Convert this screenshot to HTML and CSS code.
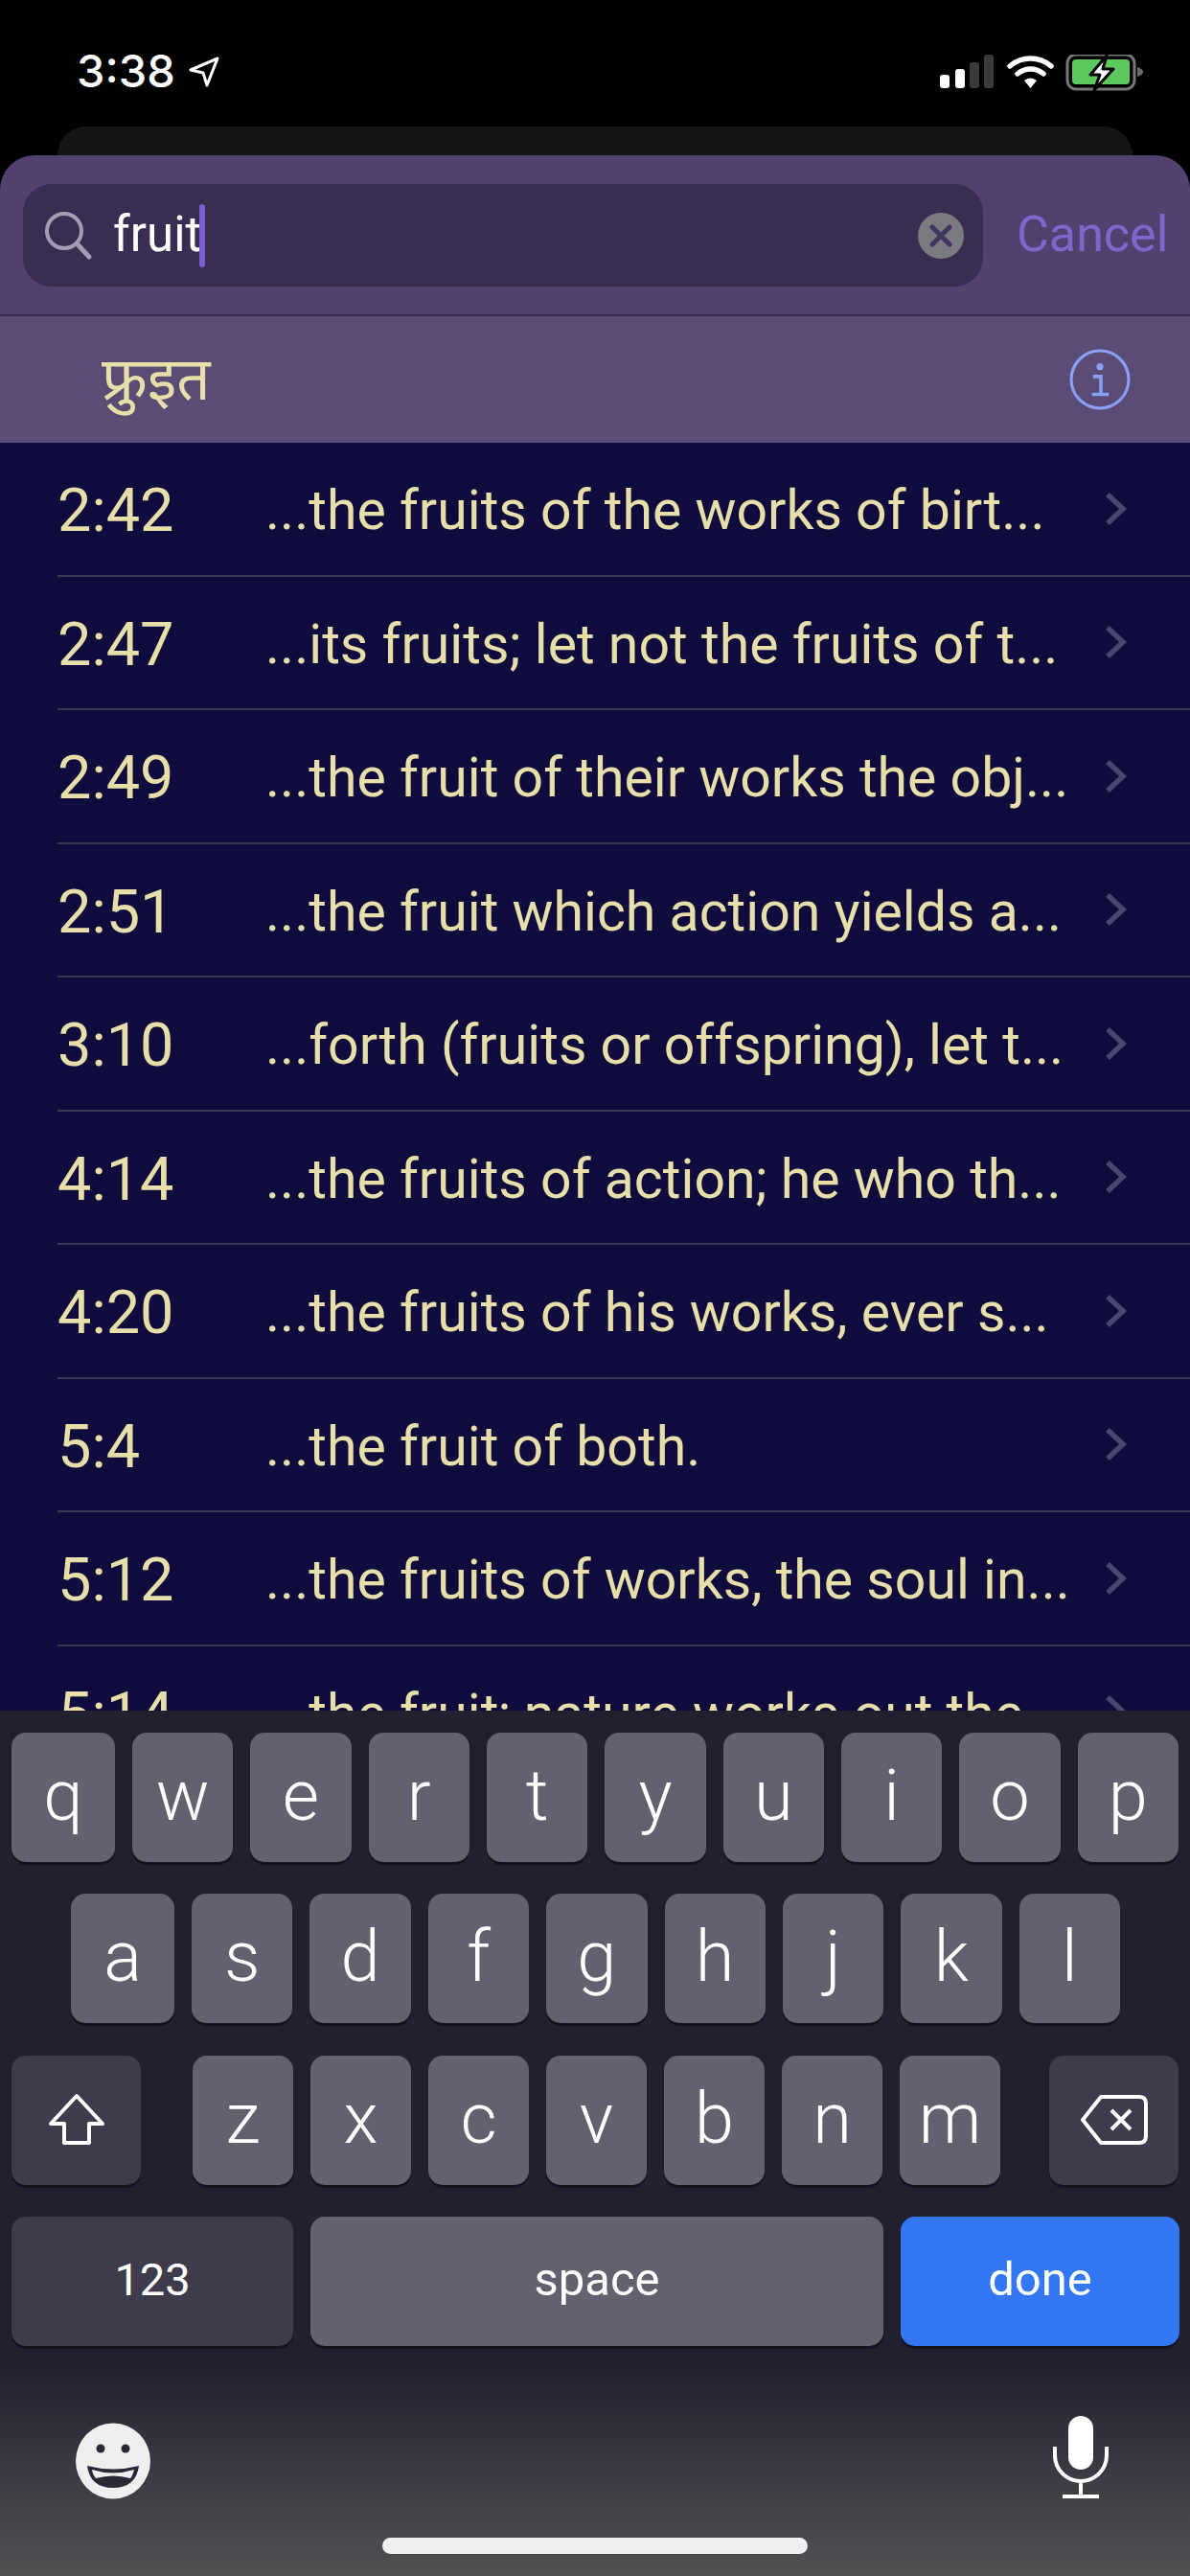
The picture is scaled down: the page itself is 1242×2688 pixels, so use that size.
FILE: index.html
```html
<!DOCTYPE html>
<html lang="en">
<head>
    <meta charset="UTF-8">
    <meta name="viewport" content="width=device-width, initial-scale=1.0">
    <title>Search</title>
    <link rel="stylesheet" href="styles.css">
</head>
<body>
    <div class="status-bar">
        <div class="status-left">
            <span class="time">3:38</span>
            <svg class="arrow" width="32" height="32" viewBox="0 0 32 32"><path d="M30 2 L2 14 L15 17 L19 30 Z" fill="none" stroke="#fff" stroke-width="3" stroke-linejoin="round"/></svg>
        </div>
        <div class="status-right">
            <svg width="214" height="40" viewBox="0 0 214 40">
                <rect x="0" y="21" width="10" height="14" rx="3" fill="#fff"/>
                <rect x="16" y="15" width="10" height="20" rx="3" fill="#fff"/>
                <rect x="31" y="8" width="10" height="27" rx="3" fill="#3a3a3c"/>
                <rect x="46" y="0" width="10" height="35" rx="3" fill="#3a3a3c"/>
                <path d="M73 12 A33 33 0 0 1 116 12" fill="none" stroke="#fff" stroke-width="5.5" stroke-linecap="round"/>
                <path d="M81 20 A21 21 0 0 1 108 20" fill="none" stroke="#fff" stroke-width="5.5" stroke-linecap="round"/>
                <path d="M88 27 Q94.500 22 101 27 L94.500 35 Z" fill="#fff"/>
                <rect x="133" y="0" width="70" height="36" rx="9" fill="none" stroke="#77777a" stroke-width="3"/>
                <rect x="138" y="5" width="60" height="26" rx="4" fill="#5cc85e"/>
                <path d="M206 13 Q212 15 212 18 Q212 21 206 23 Z" fill="#6b6b6e"/>
                <path d="M174 1 L157 21 L167 21 L161 37 L181 15 L170 15 Z" fill="#fff" stroke="#000" stroke-width="3" stroke-linejoin="round"/>
            </svg>
        </div>
    </div>
    <div class="card-peek"></div>

    <div class="sheet">
        <div class="search-header">
            <div class="search-field">
                <svg class="search-icon" width="52" height="52" viewBox="0 0 52 52"><circle cx="21" cy="21" r="18" fill="none" stroke="#a39db3" stroke-width="4"/><path d="M34 34 L47 48" stroke="#a39db3" stroke-width="5" stroke-linecap="round"/></svg>
                <span class="search-text">fruit</span>
                <span class="caret"></span>
                <svg class="clear-icon" width="48" height="48" viewBox="0 0 48 48"><circle cx="24" cy="24" r="24" fill="#7b7a80"/><path d="M15 15 L33 33 M33 15 L15 33" stroke="#3f3560" stroke-width="5" stroke-linecap="round"/></svg>
            </div>
            <span class="cancel">Cancel</span>
        </div>
        <div class="info-row">
            <span class="hindi">फ्रुइत</span>
            <svg width="64" height="64" viewBox="0 0 62 62">
                <circle cx="31" cy="31" r="29" fill="none" stroke="#8aa0f5" stroke-width="3"/>
                <circle cx="31" cy="18" r="3.500" fill="#8aa0f5"/>
                <path d="M24 28 H32 V45 M23 46 H40" fill="none" stroke="#8aa0f5" stroke-width="3.500"/>
            </svg>
        </div>
        <div class="results">
            <div class="row"><span class="ref">2:42</span><span class="snippet">...the fruits of the works of birt...</span><svg class="chevron" width="24" height="36" viewBox="0 0 24 36"><path d="M3 3 L19 18 L3 33" fill="none" stroke="#4a4670" stroke-width="5.500"/></svg></div>
            <div class="row"><span class="ref">2:47</span><span class="snippet">...its fruits; let not the fruits of t...</span><svg class="chevron" width="24" height="36" viewBox="0 0 24 36"><path d="M3 3 L19 18 L3 33" fill="none" stroke="#4a4670" stroke-width="5.500"/></svg></div>
            <div class="row"><span class="ref">2:49</span><span class="snippet">...the fruit of their works the obj...</span><svg class="chevron" width="24" height="36" viewBox="0 0 24 36"><path d="M3 3 L19 18 L3 33" fill="none" stroke="#4a4670" stroke-width="5.500"/></svg></div>
            <div class="row"><span class="ref">2:51</span><span class="snippet">...the fruit which action yields a...</span><svg class="chevron" width="24" height="36" viewBox="0 0 24 36"><path d="M3 3 L19 18 L3 33" fill="none" stroke="#4a4670" stroke-width="5.500"/></svg></div>
            <div class="row"><span class="ref">3:10</span><span class="snippet">...forth (fruits or offspring), let t...</span><svg class="chevron" width="24" height="36" viewBox="0 0 24 36"><path d="M3 3 L19 18 L3 33" fill="none" stroke="#4a4670" stroke-width="5.500"/></svg></div>
            <div class="row"><span class="ref">4:14</span><span class="snippet">...the fruits of action; he who th...</span><svg class="chevron" width="24" height="36" viewBox="0 0 24 36"><path d="M3 3 L19 18 L3 33" fill="none" stroke="#4a4670" stroke-width="5.500"/></svg></div>
            <div class="row"><span class="ref">4:20</span><span class="snippet">...the fruits of his works, ever s...</span><svg class="chevron" width="24" height="36" viewBox="0 0 24 36"><path d="M3 3 L19 18 L3 33" fill="none" stroke="#4a4670" stroke-width="5.500"/></svg></div>
            <div class="row"><span class="ref">5:4</span><span class="snippet">...the fruit of both.</span><svg class="chevron" width="24" height="36" viewBox="0 0 24 36"><path d="M3 3 L19 18 L3 33" fill="none" stroke="#4a4670" stroke-width="5.500"/></svg></div>
            <div class="row"><span class="ref">5:12</span><span class="snippet">...the fruits of works, the soul in...</span><svg class="chevron" width="24" height="36" viewBox="0 0 24 36"><path d="M3 3 L19 18 L3 33" fill="none" stroke="#4a4670" stroke-width="5.500"/></svg></div>
            <div class="row"><span class="ref">5:14</span><span class="snippet">...the fruit; nature works out the...</span><svg class="chevron" width="24" height="36" viewBox="0 0 24 36"><path d="M3 3 L19 18 L3 33" fill="none" stroke="#4a4670" stroke-width="5.500"/></svg></div>
        </div>

        <div class="keyboard">
            <div class="key-row row-top">
                <div class="key key-wide">q</div><div class="key">w</div><div class="key">e</div><div class="key">r</div><div class="key">t</div><div class="key">y</div><div class="key">u</div><div class="key">i</div><div class="key">o</div><div class="key">p</div>
            </div>
            <div class="key-row row-middle">
                <div class="key key-wide">a</div><div class="key">s</div><div class="key">d</div><div class="key">f</div><div class="key">g</div><div class="key">h</div><div class="key">j</div><div class="key">k</div><div class="key">l</div>
            </div>
            <div class="key-row row-bottom">
                <div class="key key-dark key-shift">
                    <svg width="60" height="56" viewBox="0 0 60 56"><path d="M30 3 L57 32 H43 V52 H17 V32 H3 Z" fill="none" stroke="#fff" stroke-width="4" stroke-linejoin="round"/></svg>
                </div>
                <div class="letters">
                    <div class="key">z</div><div class="key">x</div><div class="key">c</div><div class="key">v</div><div class="key">b</div><div class="key">n</div><div class="key">m</div>
                </div>
                <div class="key key-dark key-delete">
                    <svg width="72" height="54" viewBox="0 0 72 54"><path d="M22 3 H62 Q69 3 69 10 V44 Q69 51 62 51 H22 L3 27 Z" fill="none" stroke="#fff" stroke-width="4" stroke-linejoin="round"/><path d="M33 17 L53 37 M53 17 L33 37" stroke="#fff" stroke-width="4"/></svg>
                </div>
            </div>
            <div class="key-row row-actions">
                <div class="key key-dark key-action key-123">123</div>
                <div class="key key-action key-space">space</div>
                <div class="key key-action key-done">done</div>
            </div>
            <div class="kb-footer">
                <svg class="emoji" width="80" height="80" viewBox="0 0 80 80">
                    <ellipse cx="40" cy="40" rx="39" ry="39.500" fill="#efefef"/>
                    <circle cx="27" cy="27" r="4.500" fill="#2b2935"/>
                    <circle cx="53" cy="27" r="4.500" fill="#2b2935"/>
                    <path d="M13 45 Q40 52 67 45 Q64 68 40 68 Q16 68 13 45 Z" fill="#2b2935"/>
                    <path d="M18 49 Q40 56 62 49 Q60 56 58 58 Q40 53 22 58 Q19 55 18 49 Z" fill="#efefef"/>
                </svg>
                <svg width="60" height="88" viewBox="0 0 60 88">
                    <rect x="17" y="1" width="26" height="56" rx="13" fill="#fff"/>
                    <path d="M3 33 V42 A27 27 0 0 0 57 42 V33 M30 69 V84 M11 85 H49" fill="none" stroke="#fff" stroke-width="4"/>
                </svg>
            </div>
            <div class="home-indicator"></div>
        </div>
    </div>
</body>
</html>
```

FILE: styles.css
```css
body {
    margin: 0;
    height: 2688px;
    display: flex;
    flex-direction: column;
    overflow: hidden;
    background-color: #000;
    font-family: Roboto, "Noto Sans", "Noto Sans Devanagari", sans-serif;
}

.status-bar {
    height: 132px;
    display: flex;
    justify-content: space-between;
    box-sizing: border-box;
    padding: 50px 47px 0 80px;
}

.status-left {
    display: flex;
    align-items: flex-start;
    gap: 14px;
}

.time {
    color: #fff;
    font-family: Inter, sans-serif;
    font-size: 47px;
    font-weight: 500;
    line-height: 48px;
}

.arrow {
    margin-top: 9px;
}

.status-right svg {
    display: block;
    margin: 7px 0 0 0;
}

.card-peek {
    height: 30px;
    margin: 0 60px;
    background-color: #141416;
    border-radius: 30px 30px 0 0;
}

.sheet {
    flex: 1;
    display: flex;
    flex-direction: column;
    min-height: 0;
    background-color: #0f0b3d;
    border-radius: 36px 36px 0 0;
    overflow: hidden;
}

.search-header {
    height: 168px;
    flex-shrink: 0;
    box-sizing: border-box;
    padding: 30px 0 0 24px;
    display: flex;
    align-items: flex-start;
    background-color: #50416f;
    border-bottom: 2px solid #3a2f55;
}

.search-field {
    width: 1002px;
    height: 107px;
    box-sizing: border-box;
    padding: 0 20px 0 22px;
    display: flex;
    align-items: center;
    background-color: #392d52;
    border-radius: 30px;
}

.search-text {
    margin: 0 0 2px 20px;
    color: #fff;
    font-size: 51px;
}

.caret {
    width: 6px;
    height: 66px;
    margin-left: -2px;
    background-color: #7a5fd0;
    border-radius: 3px;
}

.clear-icon {
    margin-left: auto;
}

.cancel {
    margin: 21px 0 0 35px;
    color: #7d66cc;
    font-size: 52px;
    line-height: 64px;
}

.info-row {
    height: 132px;
    flex-shrink: 0;
    box-sizing: border-box;
    padding: 0 62px 0 106px;
    display: flex;
    align-items: center;
    justify-content: space-between;
    background-color: #5a4c75;
}

.hindi {
    color: #e6dfaa;
    font-size: 62px;
    line-height: 80px;
}

.results {
    flex: 1;
    min-height: 0;
    overflow: hidden;
}

.row {
    height: 139.5px;
    box-sizing: border-box;
    margin-left: 60px;
    padding-right: 65px;
    display: flex;
    align-items: center;
    border-bottom: 2px solid #3a3550;
    color: #e6dfaa;
    font-size: 57.200px;
}

.ref {
    width: 217px;
    flex-shrink: 0;
    padding-top: 4px;
    font-size: 63px;
}

.snippet {
    flex: 1;
    padding-top: 4px;
    white-space: nowrap;
    overflow: hidden;
}

.keyboard {
    height: 903px;
    flex-shrink: 0;
    position: relative;
    box-sizing: border-box;
    padding-top: 23px;
    background: linear-gradient(to bottom, #22202f 0, #22202f 680px, #525254 100%);
}

.key-row {
    height: 135px;
    display: flex;
    gap: 18px;
    margin-bottom: 33.300px;
}

.row-top {
    padding: 0 12px;
}

.row-middle {
    padding: 0 73px 0 74px;
}

.row-bottom {
    padding: 0 12px;
}

.row-actions {
    padding: 0 12px;
}

.letters {
    width: 843px;
    margin-left: 36px;
    display: flex;
    gap: 18px;
}

.key {
    flex: 1;
    box-sizing: border-box;
    padding-bottom: 4px;
    display: flex;
    align-items: center;
    justify-content: center;
    background-color: #63616e;
    border-radius: 15px;
    box-shadow: 0 3px 0 #14131c;
    color: #fff;
    font-size: 74px;
    font-weight: 300;
}

.key-wide {
    flex: none;
    width: 108px;
}

.key-dark {
    background-color: #3e3c4a;
}

.key-shift,
.key-delete {
    flex: none;
    width: 135px;
    padding-bottom: 0;
}

.key-delete {
    margin-left: auto;
}

.key-action {
    flex: none;
    font-size: 49px;
    font-weight: 400;
}

.key-123 {
    width: 294px;
    font-size: 47px;
}

.key-space {
    width: 598px;
}

.key-done {
    width: 291px;
    background-color: #3377f5;
}

.kb-footer {
    margin-top: 72px;
    padding: 0 84px 0 78px;
    display: flex;
    justify-content: space-between;
    align-items: flex-start;
}

.emoji {
    margin-top: 8px;
}

.home-indicator {
    position: absolute;
    left: 399px;
    bottom: 23px;
    width: 444px;
    height: 17px;
    background-color: #efefef;
    border-radius: 9px;
}
```
